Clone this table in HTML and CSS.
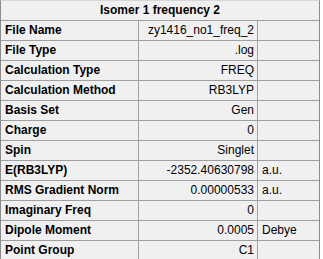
FILE: index.html
```html
<!DOCTYPE html>
<html>
<head>
<meta charset="utf-8">
<link rel="stylesheet" href="styles.css">
</head>
<body>
<div class="props">
  <div class="title">Isomer 1 frequency 2</div>
  <div class="grid">
    <div class="k">File Name</div><div class="v">zy1416_no1_freq_2</div><div class="u"></div>
    <div class="k">File Type</div><div class="v">.log</div><div class="u"></div>
    <div class="k">Calculation Type</div><div class="v">FREQ</div><div class="u"></div>
    <div class="k">Calculation Method</div><div class="v">RB3LYP</div><div class="u"></div>
    <div class="k">Basis Set</div><div class="v">Gen</div><div class="u"></div>
    <div class="k">Charge</div><div class="v">0</div><div class="u"></div>
    <div class="k">Spin</div><div class="v">Singlet</div><div class="u"></div>
    <div class="k">E(RB3LYP)</div><div class="v">-2352.40630798</div><div class="u">a.u.</div>
    <div class="k">RMS Gradient Norm</div><div class="v">0.00000533</div><div class="u">a.u.</div>
    <div class="k">Imaginary Freq</div><div class="v">0</div><div class="u"></div>
    <div class="k">Dipole Moment</div><div class="v">0.0005</div><div class="u">Debye</div>
    <div class="k">Point Group</div><div class="v">C1</div><div class="u"></div>
  </div>
</div>
</body>
</html>
```
FILE: styles.css
```css
html, body {
  margin: 0;
  padding: 0;
  background: #ffffff;
}

.props {
  width: 318px;
  background: #f0f0f0;
  border-left: 1px solid #8c8c8c;
  border-right: 1px solid #8c8c8c;
  border-top: 1px solid #d8d8d8;
  font-family: "Liberation Sans", Arial, sans-serif;
  font-size: 12px;
  color: #000;
}

.title {
  height: 19px;
  line-height: 19px;
  text-align: center;
  font-weight: bold;
  border-bottom: 1px solid #a0a0a0;
}

.grid {
  display: grid;
  grid-template-columns: 137px 118px 61px;
  column-gap: 1px;
  background: #a0a0a0;
  row-gap: 1px;
  padding-bottom: 1px;
}

.grid > div {
  background: #f0f0f0;
  height: 19px;
  line-height: 19px;
  white-space: nowrap;
  overflow: hidden;
}

.k {
  font-weight: bold;
  padding-left: 4px;
}

.v {
  text-align: right;
  padding-right: 3px;
}

.u {
  padding-left: 4px;
}
```
